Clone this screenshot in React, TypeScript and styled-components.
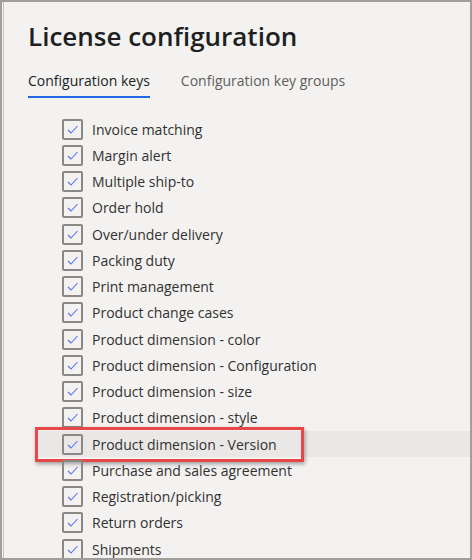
import React from "react";
import styled, { createGlobalStyle } from "styled-components";

const Global = createGlobalStyle`
  html, body { margin: 0; padding: 0; background: #f3f2f1; }
  #root { width: 472px; height: 560px; }
`;

const Frame = styled.div`
  box-sizing: border-box;
  width: 472px;
  height: 560px;
  border: 2px solid #a09f9e;
  background: #f3f2f1;
  overflow: hidden;
  position: relative;
  font-family: "Open Sans", "Noto Sans", sans-serif;
  color: #323130;
  &::before {
    content: "";
    position: absolute;
    left: 1px; top: 0; bottom: 0;
    width: 1px;
    background: #c8c6c4;
  }
`;

const Title = styled.h1`
  margin: 0;
  padding: 16px 0 0 26px;
  font-size: 26px;
  font-weight: 600;
  line-height: 36px;
  color: #201f1e;
`;

const Tabs = styled.div`
  display: flex;
  gap: 31px;
  padding: 17px 0 0 26px;
`;

const Tab = styled.div<{ $active?: boolean }>`
  font-size: 14px;
  line-height: 20px;
  padding-bottom: 5px;
  color: ${(p) => (p.$active ? "#201f1e" : "#605e5c")};
  border-bottom: 2px solid ${(p) => (p.$active ? "#2266e3" : "transparent")};
`;

const List = styled.div`
  display: flex;
  flex-direction: column;
  padding-top: 18px;
`;

const Row = styled.div<{ $selected?: boolean }>`
  position: relative;
  display: flex;
  align-items: center;
  gap: 9px;
  height: 26.25px;
  background: ${(p) => (p.$selected ? "#e9e8e7" : "transparent")};
  margin-left: ${(p) => (p.$selected ? "34px" : "0")};
  padding-left: ${(p) => (p.$selected ? "26px" : "60px")};
`;

const Box = styled.div`
  box-sizing: border-box;
  width: 21px;
  height: 21px;
  border: 2px solid #8a8886;
  border-radius: 2px;
  display: flex;
  align-items: center;
  justify-content: center;
  flex: none;
`;

const Label = styled.span`
  font-size: 14px;
  color: #323130;
  white-space: nowrap;
`;

const Highlight = styled.div`
  position: absolute;
  left: -1px;
  top: -4px;
  width: 269px;
  height: 35px;
  box-sizing: border-box;
  border: 3px solid #e8474a;
  box-shadow: 1px 2px 4px rgba(0, 0, 0, 0.35);
  pointer-events: none;
`;

const Check = () => (
  <svg width="13" height="13" viewBox="0 0 13 13">
    <path d="M2 7 L5 10 L11.5 3" fill="none" stroke="#5b6ff0" strokeWidth="1.1" />
  </svg>
);

const items = [
  "Invoice matching",
  "Margin alert",
  "Multiple ship-to",
  "Order hold",
  "Over/under delivery",
  "Packing duty",
  "Print management",
  "Product change cases",
  "Product dimension - color",
  "Product dimension - Configuration",
  "Product dimension - size",
  "Product dimension - style",
  "Product dimension - Version",
  "Purchase and sales agreement",
  "Registration/picking",
  "Return orders",
  "Shipments",
];

export default function App() {
  return (
    <>
      <Global />
      <Frame>
        <Title>License configuration</Title>
        <Tabs>
          <Tab $active>Configuration keys</Tab>
          <Tab>Configuration key groups</Tab>
        </Tabs>
        <List>
          {items.map((t) => {
            const sel = t === "Product dimension - Version";
            return (
              <Row key={t} $selected={sel}>
                <Box>
                  <Check />
                </Box>
                <Label>{t}</Label>
                {sel && <Highlight />}
              </Row>
            );
          })}
        </List>
      </Frame>
    </>
  );
}
